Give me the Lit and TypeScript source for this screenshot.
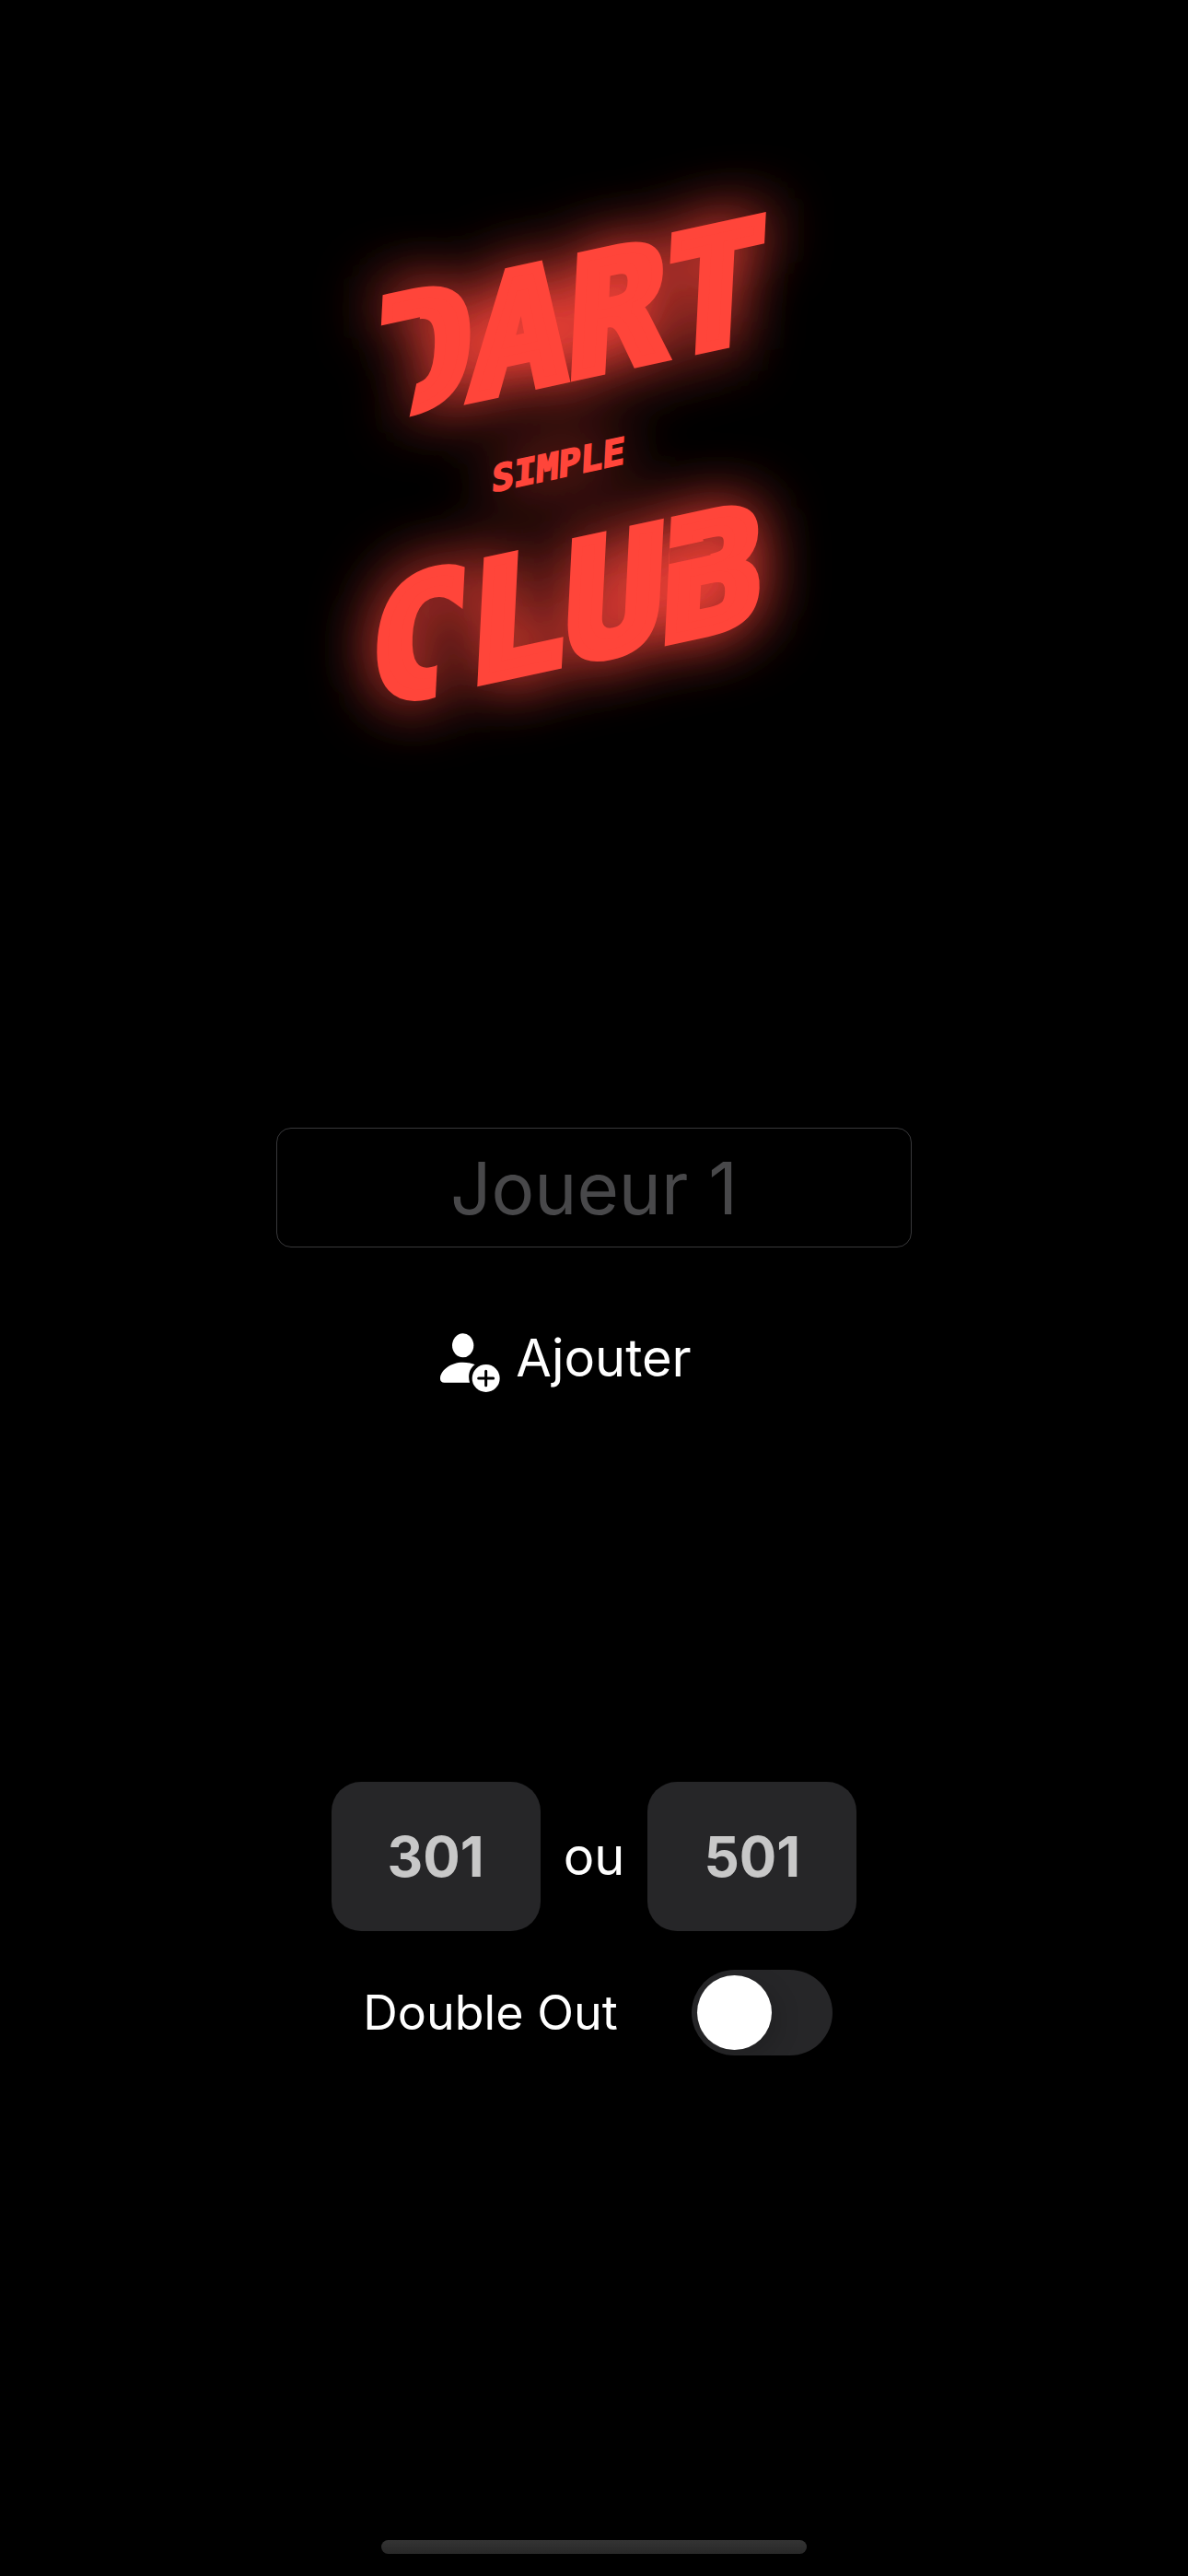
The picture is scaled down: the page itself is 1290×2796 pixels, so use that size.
import { LitElement, html, css, svg } from "lit";
import { customElement, state } from "lit/decorators.js";

@customElement("club-logo")
class ClubLogo extends LitElement {
  static styles = css`
    :host {
      display: block;
    }
    .logo {
      display: block;
      width: 100%;
      height: auto;
      overflow: visible;
    }
    .word {
      font-family: "DejaVu Sans Mono", monospace;
      font-weight: 700;
      fill: #ff453a;
      stroke: #ff453a;
      stroke-linejoin: miter;
    }
    .large {
      font-size: 176px;
      stroke-width: 12px;
    }
    .small {
      font-size: 40px;
      stroke-width: 2px;
    }
  `;

  private words() {
    return svg`
      <g transform="matrix(1 -0.216 -0.05 1 0 0)">
        <g mask="url(#cut-dart)"><text class="word large" x="122" y="382">DART</text></g>
        <text class="word small" x="258" y="490">SIMPLE</text>
        <g mask="url(#cut-club)"><text class="word large" x="134" y="694">CLUB</text></g>
      </g>`;
  }

  render() {
    return html`
      <svg class="logo" viewBox="0 0 640 820" role="img" aria-label="Dart Simple Club">
        <defs>
          <filter id="glow" x="-40%" y="-40%" width="180%" height="180%">
            <feGaussianBlur stdDeviation="34" />
            <feComponentTransfer>
              <feFuncA type="linear" slope="1.2" />
            </feComponentTransfer>
          </filter>
          <mask id="cut-dart" maskUnits="userSpaceOnUse" x="0" y="0" width="900" height="1000">
            <rect width="900" height="1000" fill="#fff" />
            <path d="M100 281 H170 V352 L162 400 H100 Z" fill="#000" />
          </mask>
          <mask id="cut-club" maskUnits="userSpaceOnUse" x="0" y="0" width="900" height="1000">
            <rect width="900" height="1000" fill="#fff" />
            <path d="M208 620 H236 V710 H208 Z" fill="#000" />
            <path d="M457 594 H502 V611 H457 Z" fill="#000" />
          </mask>
        </defs>
        <g filter="url(#glow)" aria-hidden="true">${this.words()}</g>
        ${this.words()}
      </svg>
    `;
  }
}

@customElement("app-root")
class AppRoot extends LitElement {
  static styles = css`
    :host {
      display: block;
      font-family: Inter, "Liberation Sans", sans-serif;
      color: #fff;
      background: #000;
    }
    *,
    *::before {
      box-sizing: border-box;
    }
    .screen {
      display: flex;
      flex-direction: column;
      align-items: center;
      min-height: 100vh;
      padding: 100px 24px 24px;
      background: #000;
      overflow: hidden;
    }
    .brand {
      width: 100%;
      max-width: 640px;
      margin: 0 50px 0 0;
    }
    .players {
      display: flex;
      flex-direction: column;
      align-items: center;
      gap: 80px;
      width: 100%;
      max-width: 690px;
      margin-top: 304px;
    }
    .name {
      width: 100%;
      height: 130px;
      padding: 0 24px;
      border: 1px solid #38383a;
      border-radius: 16px;
      background: transparent;
      color: #fff;
      font: inherit;
      font-size: 78px;
      text-align: center;
      outline: none;
    }
    .name::placeholder {
      color: #48484a;
      opacity: 1;
    }
    button {
      border: 0;
      font: inherit;
      cursor: pointer;
    }
    .add {
      display: flex;
      align-items: center;
      gap: 16px;
      margin-right: 62px;
      padding: 0;
      background: none;
      color: #fff;
      font-size: 56px;
      line-height: 80px;
    }
    .add-icon {
      width: 67px;
      height: 66px;
      margin-top: 10px;
    }
    .game {
      display: flex;
      flex-direction: column;
      align-items: center;
      gap: 42px;
      margin-top: 420px;
    }
    .scores {
      display: flex;
      align-items: center;
      gap: 25px;
      font-size: 56px;
    }
    .score {
      width: 227px;
      height: 162px;
      border-radius: 32px;
      background: #262628;
      color: #c8c8c8;
      font-size: 60px;
      font-weight: 700;
    }
    .option {
      display: flex;
      align-items: center;
      gap: 80px;
      margin-left: 8px;
      font-size: 52px;
    }
    .switch {
      display: flex;
      align-items: center;
      appearance: none;
      width: 153px;
      height: 93px;
      margin: 0;
      padding: 6px;
      border-radius: 47px;
      background: #262628;
      cursor: pointer;
    }
    .switch::before {
      content: "";
      width: 81px;
      height: 81px;
      border-radius: 50%;
      background: #fff;
      box-shadow: 8px 8px 24px rgba(0, 0, 0, 0.15);
    }
    .switch:checked {
      justify-content: flex-end;
      background: #30d158;
    }
    .home {
      width: 462px;
      height: 15px;
      margin-top: auto;
      border-radius: 8px;
      background: linear-gradient(#343434, #282828);
    }
  `;

  @state() private doubleOut = false;

  render() {
    return html`
      <main class="screen">
        <club-logo class="brand"></club-logo>
        <section class="players">
          <input class="name" type="text" placeholder="Joueur 1" aria-label="Joueur 1" />
          <button class="add" type="button">
            <svg class="add-icon" viewBox="54 78 201 198" fill="currentColor" aria-hidden="true">
              <ellipse cx="131" cy="121" rx="35" ry="39" />
              <path d="M71 242 C61 242 56 237 57 226 C60 201 91 176 131 176 C147 176 160 179 170 184 C153 195 146 218 153 242 Z" />
              <circle cx="206" cy="228" r="45" />
              <path d="M206 205 V251 M182 228 H230" stroke="#000" stroke-width="9" stroke-linecap="round" />
            </svg>
            <span>Ajouter</span>
          </button>
        </section>
        <section class="game">
          <div class="scores">
            <button class="score" type="button">301</button>
            <span>ou</span>
            <button class="score" type="button">501</button>
          </div>
          <div class="option">
            <label for="double-out">Double Out</label>
            <input
              id="double-out"
              class="switch"
              type="checkbox"
              role="switch"
              .checked=${this.doubleOut}
              @change=${(e: Event) => (this.doubleOut = (e.target as HTMLInputElement).checked)}
            />
          </div>
        </section>
        <div class="home"></div>
      </main>
    `;
  }
}
